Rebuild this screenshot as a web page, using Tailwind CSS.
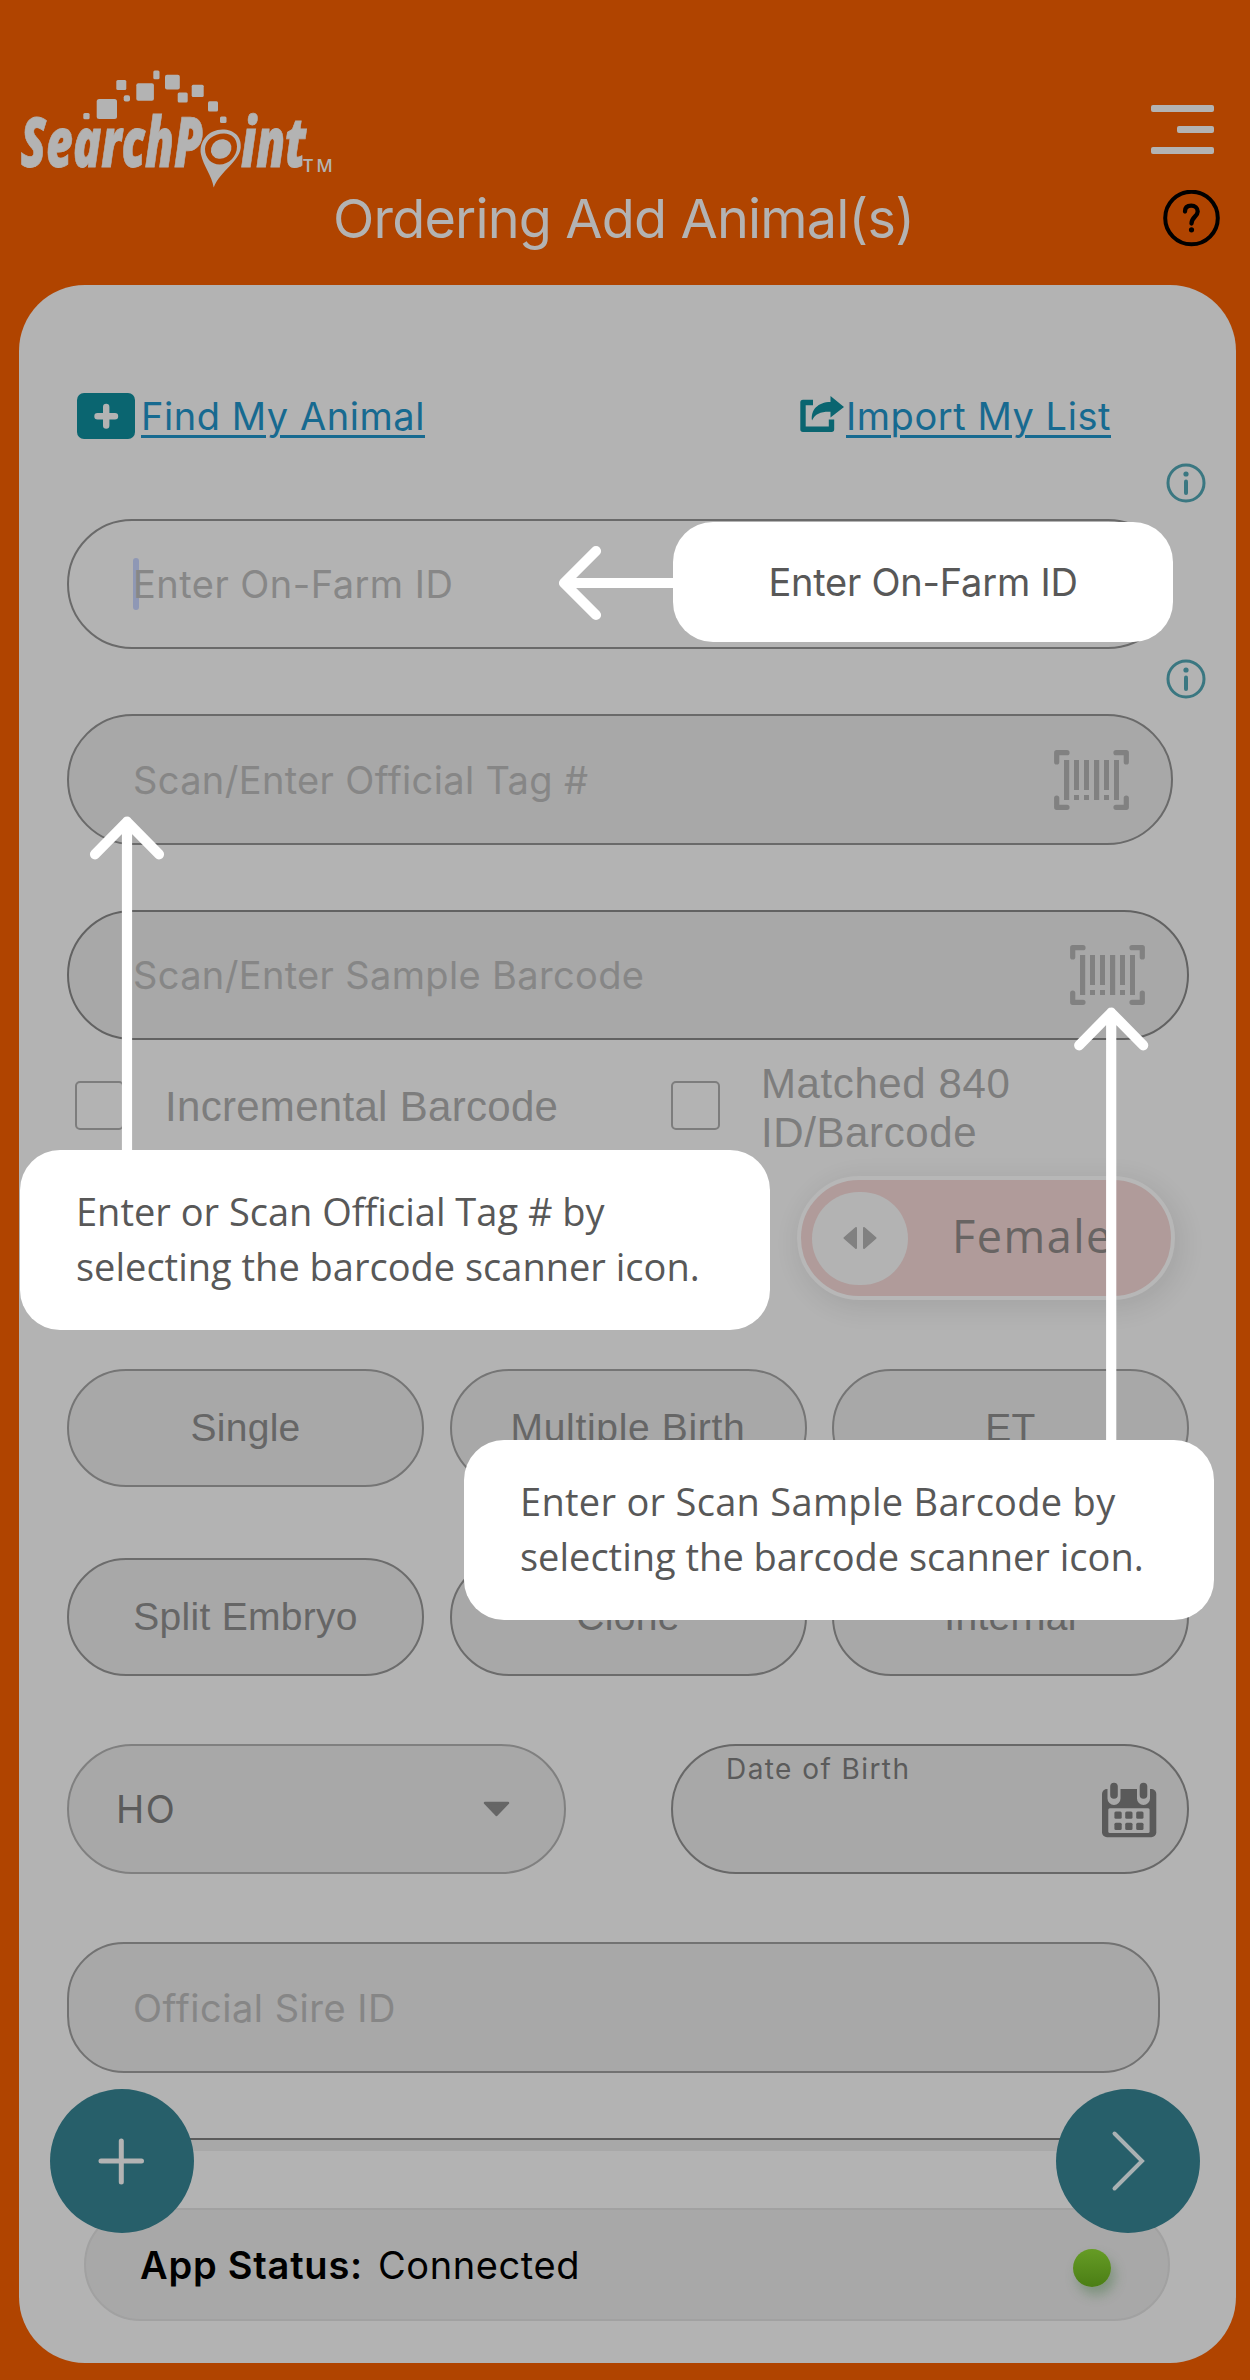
<!DOCTYPE html>
<html lang="en">
<head>
<meta charset="utf-8">
<title>SearchPoint - Ordering Add Animal(s)</title>
<script src="https://cdn.jsdelivr.net/npm/@tailwindcss/browser@4"></script>
</head>
<body class="bg-[#b04400]">
<svg class="hidden">
  <symbol id="scan" viewBox="0 0 75 60">
    <path d="M2.7 12V2.7H13M62 2.7h10.300V12M2.700 48v9.300H13M62 57.300h10.300V48" fill="none" stroke="#818181" stroke-width="5.200" stroke-linecap="round" stroke-linejoin="round"/>
    <g fill="#818181">
      <rect x="10" y="10" width="5.200" height="40"/><rect x="20" y="10" width="5" height="30"/><rect x="20" y="45" width="5" height="5"/>
      <rect x="30" y="10" width="5" height="30"/><rect x="30" y="45" width="5" height="5"/><rect x="40" y="10" width="5.200" height="40"/>
      <rect x="50" y="10" width="5" height="30"/><rect x="50" y="45" width="5" height="5"/><rect x="60" y="10" width="5" height="40"/>
    </g>
  </symbol>
  <symbol id="info" viewBox="0 0 40 40">
    <circle cx="20" cy="20" r="18" fill="none" stroke="#3a7781" stroke-width="3"/>
    <circle cx="20" cy="11" r="2.600" fill="#3a7781"/>
    <path d="M20 18.500v11.500" stroke="#3a7781" stroke-width="4" stroke-linecap="round"/>
  </symbol>
</svg>
<div class="relative w-[1250px] h-[2380px] overflow-hidden font-['Inter',sans-serif] text-[38px] leading-[46px] whitespace-nowrap">
  <header class="h-[285px] flex flex-col">
    <div class="h-[190px] pt-[64px] pl-[16px] pr-[36px] flex justify-between items-start">
      <svg class="w-[324px] h-[130px] shrink-0" viewBox="16 64 324 130" fill="#b3b3b3">
        <g>
          <rect x="83.300" y="113" width="6.300" height="6.300" rx="1.500"/><rect x="96.700" y="99" width="20.300" height="20" rx="2.500"/>
          <rect x="116.300" y="80" width="10" height="10" rx="1.500"/><rect x="123.700" y="95.300" width="6.300" height="6.300" rx="2"/>
          <rect x="136.300" y="83.200" width="17.600" height="17.600" rx="2"/><rect x="153.300" y="70.500" width="6.200" height="8.700" rx="1.500"/>
          <rect x="165" y="74.800" width="14.800" height="14.600" rx="2"/><rect x="177.700" y="92.600" width="10" height="10" rx="1.500"/>
          <rect x="191.700" y="84.700" width="12" height="12.200" rx="1.500"/><rect x="208" y="101.300" width="10" height="10.300" rx="1.500"/>
          <rect x="220" y="116.600" width="6.500" height="6.300" rx="1.500"/>
        </g>
        <g class="font-['Open_Sans',sans-serif] font-extrabold italic" font-size="69" stroke="#b3b3b3" stroke-width="0.800">
          <text transform="translate(20.500 167) scale(.675 1)">SearchP</text>
          <text transform="translate(241 167) scale(.675 1)">int</text>
        </g>
        <path fill-rule="evenodd" d="M213.700 187.500C212 176 203.500 166 201 154.500C198.500 141 209 129.600 222.500 129.600C234 129.600 242 137 240.700 148C239 162 221 170 213.700 187.500ZM205 149C205 158 211.500 164.500 219.500 164.500C229 164.500 237 156.500 237 146.500C237 138.500 231.500 133.500 224 133.500C213.500 133.500 205 140.500 205 149Z"/>
        <ellipse cx="221.200" cy="149" rx="10.700" ry="9.400" transform="rotate(-35 221.200 149)"/>
        <text class="font-['Open_Sans',sans-serif] font-semibold" font-size="18" letter-spacing="3" x="303" y="172">TM</text>
      </svg>
      <div class="mt-[41px] flex flex-col items-end gap-[14px]">
        <div class="w-[63px] h-[7px] rounded-[2px] bg-[#b3b3b3]"></div>
        <div class="w-[37px] h-[7px] rounded-[2px] bg-[#b3b3b3]"></div>
        <div class="w-[63px] h-[7px] rounded-[2px] bg-[#b3b3b3]"></div>
      </div>
    </div>
    <div class="h-[57px] flex items-center justify-end pr-[30px]">
      <h1 class="text-[54px] leading-[57px] tracking-[-0.83px] text-[#b3b3b3] mr-[249px]">Ordering Add Animal(s)</h1>
      <svg class="w-[57px] h-[57px]" viewBox="0 0 57 57" fill="none" stroke="#000">
        <circle cx="28.500" cy="28" r="26.300" stroke-width="4"/>
        <path d="M22 21.500C22 17.500 24.500 15.600 28.200 15.600C32 15.600 34.700 18 34.700 21.500C34.700 26.500 28.500 27 28.500 33.500" stroke-width="4.300" stroke-linecap="round"/>
        <circle cx="28.500" cy="39.800" r="2.600" fill="#000" stroke="none"/>
      </svg>
    </div>
  </header>

  <main class="ml-[19px] w-[1217px] h-[2078px] rounded-[66px] bg-[#b3b3b3] pl-[48px] pt-[108px] flex flex-col text-[#868686]">
    <div class="h-[46px] pl-[10px] flex items-center text-[#176a90]">
      <svg class="w-[58px] h-[46px] mr-[6px]" viewBox="0 0 58 46"><rect width="58" height="46" rx="7" fill="#0a6570"/><path d="M20.500 23.200h17.500M29.200 14v18.500" stroke="#b3b3b3" stroke-width="6.400" stroke-linecap="round"/></svg>
      <a class="w-[284px] tracking-[0.55px] underline decoration-[3px] underline-offset-[5px]">Find My Animal</a>
      <svg class="w-[46px] h-[42px] ml-[374px] mr-px" viewBox="0 0 46 42">
        <path d="M14 7.500H4v26.800h28.500V24.500" fill="none" stroke="#0a6570" stroke-width="5.400" stroke-linejoin="round"/>
        <path d="M31.500 1L45 12L31.500 22.500V16.800C22 16.500 16.500 18.500 13 25.500C11.500 15 19 7 31.500 7Z" fill="#0a6570"/>
      </svg>
      <a class="tracking-[0.55px] underline decoration-[3px] underline-offset-[5px]">Import My List</a>
    </div>
    <svg class="w-[40px] h-[40px] ml-[1099px] mt-[24px]"><use href="#info"/></svg>
    <div class="relative mt-[16px] w-[1106px] h-[130px] rounded-full border-2 border-[#6a6a6a] pl-[64px] flex items-center tracking-[0.47px]">
      <div class="absolute left-[64px] top-[37px] w-[6px] h-[52px] rounded-[3px] bg-[#8f98b5]"></div>
      <span class="relative text-[#878787]">Enter On-Farm ID</span>
    </div>
    <svg class="w-[40px] h-[40px] ml-[1099px] mt-[10px]"><use href="#info"/></svg>
    <div class="mt-[15px] w-[1106px] h-[131px] rounded-full border-2 border-[#6a6a6a] bg-[#a8a8a8] pl-[64px] pr-[42px] flex items-center justify-between tracking-[0.35px]">
      <span>Scan/Enter Official Tag #</span>
      <svg class="w-[75px] h-[60px]"><use href="#scan"/></svg>
    </div>
    <div class="mt-[65px] w-[1122px] h-[130px] rounded-full border-2 border-[#626262] bg-[#a8a8a8] pl-[64px] pr-[42px] flex items-center justify-between tracking-[0.35px]">
      <span>Scan/Enter Sample Barcode</span>
      <svg class="w-[75px] h-[60px]"><use href="#scan"/></svg>
    </div>
    <div class="mt-[16px] h-[100px] pl-[8px] flex items-center font-['Liberation_Sans',sans-serif] text-[42px] leading-[49px] text-[#7d7d7d]">
      <div class="w-[49px] h-[49px] -mt-[2px] rounded-[5px] border-2 border-[#7d7d7d]"></div>
      <span class="ml-[41px] w-[506px] tracking-[0.3px]">Incremental Barcode</span>
      <div class="w-[49px] h-[49px] -mt-[2px] rounded-[5px] border-2 border-[#7d7d7d]"></div>
      <span class="ml-[41px] mt-[4px] tracking-[0.6px]">Matched 840<br>ID/Barcode</span>
    </div>
    <div class="mt-[20px] ml-[730px] w-[378px] h-[124px] rounded-full border-4 border-[#b7b7b7] bg-[#b09b9a] shadow-[4px_6px_24px_4px_rgba(0,0,0,0.08)] pl-[11px] flex items-center font-['Open_Sans',sans-serif] text-[45px] text-[#686463]">
      <div class="w-[96px] h-[93px] rounded-full bg-[#b3b3b3] flex items-center justify-center">
        <svg class="w-[34px] h-[24px]" viewBox="0 0 34 24" fill="#818181" stroke="#818181" stroke-width="2" stroke-linejoin="round"><path d="M13 2v20L1.500 12ZM21 2v20L32.500 12Z"/></svg>
      </div>
      <span class="ml-[44px] pb-[5px] tracking-[1.5px]">Female</span>
    </div>
    <div class="mt-[69px] grid grid-cols-[357px_357px_357px] gap-x-[25.500px] gap-y-[71px] font-['Liberation_Sans',sans-serif] text-[39px] text-[#666] tracking-[0.3px]">
      <div class="h-[118px] rounded-full border-2 border-[#757575] bg-[#a8a8a8] flex items-center justify-center">Single</div>
      <div class="h-[118px] rounded-full border-2 border-[#757575] bg-[#a8a8a8] flex items-center justify-center tracking-[0.67px]">Multiple Birth</div>
      <div class="h-[118px] rounded-full border-2 border-[#757575] bg-[#a8a8a8] flex items-center justify-center">ET</div>
      <div class="h-[118px] rounded-full border-2 border-[#6c6c6c] bg-[#a8a8a8] flex items-center justify-center">Split Embryo</div>
      <div class="h-[118px] rounded-full border-2 border-[#6c6c6c] bg-[#a8a8a8] flex items-center justify-center">Clone</div>
      <div class="h-[118px] rounded-full border-2 border-[#6c6c6c] bg-[#a8a8a8] flex items-center justify-center">Internal</div>
    </div>
    <div class="mt-[68px] w-[1122px] flex justify-between text-[#5b5b5b]">
      <div class="w-[499px] h-[130px] rounded-full border-2 border-[#808080] bg-[#a8a8a8] pl-[47px] pr-[54px] flex items-center justify-between tracking-[1.5px]">
        <span>HO</span>
        <svg class="w-[27px] h-[16px]" viewBox="0 0 27 16"><path d="M2 2h23L13.500 14Z" fill="#666" stroke="#666" stroke-width="2.500" stroke-linejoin="round"/></svg>
      </div>
      <div class="w-[518px] h-[130px] rounded-full border-2 border-[#686868] bg-[#a8a8a8] pl-[53px] pr-[30px] flex justify-between">
        <span class="mt-[6px] text-[28px] leading-[34px] tracking-[1.43px]">Date of Birth</span>
        <svg class="w-[56px] h-[56px] mt-[36px]" viewBox="1101 1782 56 56">
          <rect x="1102" y="1789" width="54.300" height="48.300" rx="5" fill="#5a5a5a"/>
          <path d="M1114 1783v15.500M1143.500 1783v15.500" stroke="#a8a8a8" stroke-width="13" stroke-linecap="round"/>
          <path d="M1114 1786.500v8.500M1143.500 1786.500v8.500" stroke="#5a5a5a" stroke-width="7.600" stroke-linecap="round"/>
          <rect x="1108.300" y="1808.300" width="41.300" height="24.700" rx="1.500" fill="#a8a8a8"/>
          <g fill="#5a5a5a">
            <rect x="1114.400" y="1811.600" width="7.300" height="7.200" rx="1.500"/><rect x="1125.200" y="1811.600" width="7.300" height="7.200" rx="1.500"/><rect x="1136.200" y="1811.600" width="7.300" height="7.200" rx="1.500"/>
            <rect x="1114.400" y="1822.700" width="7.300" height="7.200" rx="1.500"/><rect x="1125.200" y="1822.700" width="7.300" height="7.200" rx="1.500"/><rect x="1136.200" y="1822.700" width="7.300" height="7.200" rx="1.500"/>
          </g>
        </svg>
      </div>
    </div>
    <div class="mt-[68px] w-[1093px] h-[131px] rounded-[57px] border-2 border-[#727272] bg-[#a8a8a8] pl-[64px] flex items-center tracking-[0.51px]">Official Sire ID</div>
    <div class="mt-[65px] w-[1093px] h-[13px] overflow-hidden">
      <div class="w-full h-[131px] rounded-[57px] border-2 border-[#5c5c5c] bg-[#a8a8a8]"></div>
    </div>
    <div class="mt-[57px] ml-[17px] w-[1086px] h-[113px] rounded-full border-2 border-[#a1a1a1] bg-[#a8a8a8] pl-[54px] pr-[57px] flex items-center text-black">
      <span class="font-semibold tracking-[0.77px]">App Status:</span>
      <span class="ml-[15px] grow tracking-[0.6px]">Connected</span>
      <div class="w-[38px] h-[38px] mt-[6px] rounded-full bg-linear-to-b from-[#669c25] to-[#4b7e15] shadow-[4px_8px_12px_rgba(50,110,50,0.35)]"></div>
    </div>
  </main>

  <!-- floating action buttons -->
  <div class="absolute left-[50px] top-[2089px] w-[144px] h-[144px] rounded-full bg-[#275f6a]">
    <svg class="w-full h-full" viewBox="0 0 144 144"><path d="M51 72h40.500M71.300 52v41" stroke="#b3b3b3" stroke-width="5" stroke-linecap="round"/></svg>
  </div>
  <div class="absolute left-[1056px] top-[2089px] w-[144px] h-[144px] rounded-full bg-[#275f6a]">
    <svg class="w-full h-full" viewBox="0 0 144 144"><path d="M58.500 44.500L86 72L58.500 99.500" fill="none" stroke="#a9b1b3" stroke-width="4" stroke-linecap="round"/></svg>
  </div>

  <!-- tutorial callouts -->
  <svg class="absolute left-0 top-0 w-[1250px] h-[1640px]" viewBox="0 0 1250 1640" fill="none" stroke="#fff" stroke-width="10.200" stroke-linecap="round" stroke-linejoin="round">
    <path d="M680 583H564M596 551L564 583L596 615"/>
    <path d="M127 1160V821.700M95 854.300L127 821.700L159 854.300"/>
    <path d="M1111.200 1450V1012.700M1079.200 1045.300L1111.200 1012.700L1143.200 1045.300"/>
  </svg>
  <div class="absolute left-[673px] top-[522px] w-[500px] h-[120px] rounded-[40px] bg-white flex items-center justify-center tracking-[-0.23px] text-[#585858]">Enter On-Farm ID</div>
  <div class="absolute left-[20px] top-[1150px] w-[750px] h-[180px] rounded-[40px] bg-white pl-[56px] pt-[34px] font-['Open_Sans',sans-serif] leading-[55px] text-[#585858]">Enter or Scan Official Tag # by<br>selecting the barcode scanner icon.</div>
  <div class="absolute left-[464px] top-[1440px] w-[750px] h-[180px] rounded-[40px] bg-white pl-[56px] pt-[34px] font-['Open_Sans',sans-serif] leading-[55px] text-[#585858]"><span class="tracking-[0.29px]">Enter or Scan Sample Barcode by</span><br>selecting the barcode scanner icon.</div>
</div>
</body>
</html>
